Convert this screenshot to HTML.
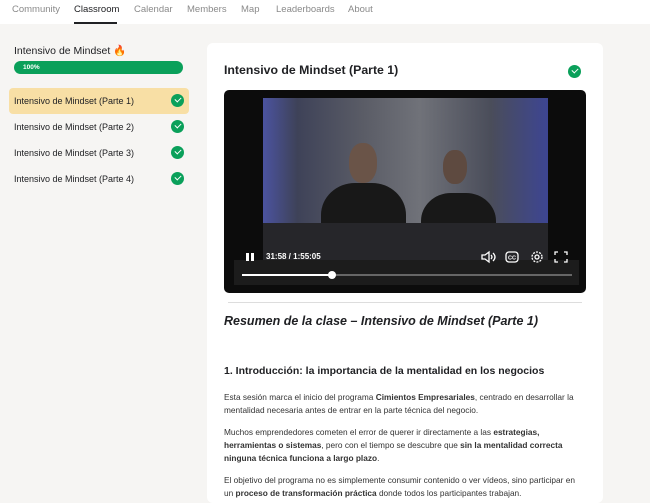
<!DOCTYPE html>
<html><head><style>
*{margin:0;padding:0;box-sizing:border-box}
body{width:650px;height:493px;overflow:hidden;background:#f6f5f3;font-family:"Liberation Sans",Arial,sans-serif;color:#202124;position:relative}
.nav{position:absolute;left:0;top:0;width:650px;height:24px;background:#fff}
.nav span{position:absolute;top:4px;font-size:9.5px;color:#8a8a8a}
.nav .act{color:#202124}
.ul{position:absolute;left:74px;top:22px;width:43px;height:2px;background:#202124}
.side-t{position:absolute;left:14px;top:44px;font-size:10.5px}
.bar{position:absolute;left:14px;top:61px;width:169px;height:13px;border-radius:7px;background:#0aa05a;color:#fff;font-size:6.5px;font-weight:bold;padding:3px 0 0 9px}
.item{position:absolute;left:9px;width:180px;height:26px;font-size:9px;padding:8px 0 0 5px;border-radius:4px}
.item.sel{background:#f8dfa5}
.chk{position:absolute;right:5px;top:6px;width:13px;height:13px;border-radius:50%;background:#0aa05a}
.chk:after{content:"";position:absolute;left:3.5px;top:2.5px;width:5px;height:3px;border-left:1.8px solid #fff;border-bottom:1.8px solid #fff;transform:rotate(-45deg)}
.card{position:absolute;left:207px;top:43px;width:396px;height:460px;background:#fff;border-radius:6px}
h1{position:absolute;left:224px;top:63px;font-size:12.3px;font-weight:bold}
.video{position:absolute;left:224px;top:90px;width:362px;height:203px;background:#0c0c0c;border-radius:5px;overflow:hidden}
.scene{position:absolute;left:39px;top:8px;width:285px;height:162px;background:linear-gradient(90deg,#4b53a0 0%,#3e4258 12%,#5a5c66 35%,#707279 55%,#4a4d5a 80%,#3d4592 100%);overflow:hidden}
.p{position:absolute;background:#181818;border-radius:40% 40% 0 0}
.tl{position:absolute;left:10px;top:170px;width:345px;height:25px;background:#1c1c1c}
.prog{position:absolute;left:18px;top:184px;width:330px;height:2px;background:#666}
.prog i{position:absolute;left:0;top:0;width:90px;height:2px;background:#fff}
.knob{position:absolute;left:104px;top:181px;width:8px;height:8px;border-radius:50%;background:#fff}
.time{position:absolute;left:42px;top:162px;font-size:8px;font-weight:bold;color:#fff}
.hr{position:absolute;left:228px;top:302px;width:354px;height:1px;background:#ddd}
h2{position:absolute;left:224px;top:314px;font-size:12.5px;font-style:italic;font-weight:bold}
h3{position:absolute;left:224px;top:365px;font-size:10.5px;font-weight:bold}
p{position:absolute;left:224px;width:360px;font-size:8.3px;line-height:13px;color:#333}
</style></head><body>
<div class="nav"><span style="left:12px">Community</span><span class="act" style="left:74px">Classroom</span><span style="left:134px">Calendar</span><span style="left:187px">Members</span><span style="left:241px">Map</span><span style="left:276px">Leaderboards</span><span style="left:348px">About</span></div>
<div class="ul"></div>
<div class="side-t">Intensivo de Mindset <span style="color:#e8742a">🔥</span></div>
<div class="bar">100%</div>
<div class="item sel" style="top:88px">Intensivo de Mindset (Parte 1)<div class="chk"></div></div>
<div class="item" style="top:114px">Intensivo de Mindset (Parte 2)<div class="chk"></div></div>
<div class="item" style="top:140px">Intensivo de Mindset (Parte 3)<div class="chk"></div></div>
<div class="item" style="top:166px">Intensivo de Mindset (Parte 4)<div class="chk"></div></div>
<div class="card"></div>
<h1>Intensivo de Mindset (Parte 1)</h1>
<div style="position:absolute;left:568px;top:65px;width:13px;height:13px"><div class="chk" style="right:0;top:0"></div></div>
<div class="video">
<div class="scene">
<div class="p" style="left:58px;top:85px;width:85px;height:80px"></div>
<div style="position:absolute;left:86px;top:45px;width:28px;height:40px;border-radius:45%;background:#6a5448"></div>
<div class="p" style="left:158px;top:95px;width:75px;height:70px"></div>
<div style="position:absolute;left:180px;top:52px;width:24px;height:34px;border-radius:45%;background:#5e4a40"></div>
<div style="position:absolute;left:0;top:125px;width:285px;height:40px;background:#26262a"></div>
</div>
<div class="tl"></div>
<div style="position:absolute;left:22px;top:163px;width:2.5px;height:8px;background:#fff"></div><div style="position:absolute;left:27px;top:163px;width:2.5px;height:8px;background:#fff"></div>
<div class="time">31:58 / 1:55:05</div>
<svg style="position:absolute;left:256px;top:160px" width="90" height="14" viewBox="0 0 90 14" fill="none" stroke="#fff" stroke-width="1.3">
<path d="M2 5h3l4-3v10l-4-3H2z"/><path d="M11 5q2 2 0 4M13 3q4 4 0 8"/>
<rect x="26" y="2" width="12" height="10" rx="3"/><text x="28" y="9.5" font-size="5.5" fill="#fff" stroke="none" font-family="Liberation Sans" font-weight="bold">CC</text>
<circle cx="57" cy="7" r="2"/><circle cx="57" cy="7" r="5" stroke-dasharray="2 1.2"/>
<path d="M75 5V2h3M84 2h3v3M87 9v3h-3M78 12h-3V9"/>
</svg>
<div class="prog"><i></i></div><div class="knob"></div>
</div>
<div class="hr"></div>
<h2>Resumen de la clase – Intensivo de Mindset (Parte 1)</h2>
<h3>1. Introducción: la importancia de la mentalidad en los negocios</h3>
<p style="top:391px">Esta sesión marca el inicio del programa <b>Cimientos Empresariales</b>, centrado en desarrollar la mentalidad necesaria antes de entrar en la parte técnica del negocio.</p>
<p style="top:426px">Muchos emprendedores cometen el error de querer ir directamente a las <b>estrategias, herramientas o sistemas</b>, pero con el tiempo se descubre que <b>sin la mentalidad correcta ninguna técnica funciona a largo plazo</b>.</p>
<p style="top:474px">El objetivo del programa no es simplemente consumir contenido o ver vídeos, sino participar en un <b>proceso de transformación práctica</b> donde todos los participantes trabajan.</p>
</body></html>
